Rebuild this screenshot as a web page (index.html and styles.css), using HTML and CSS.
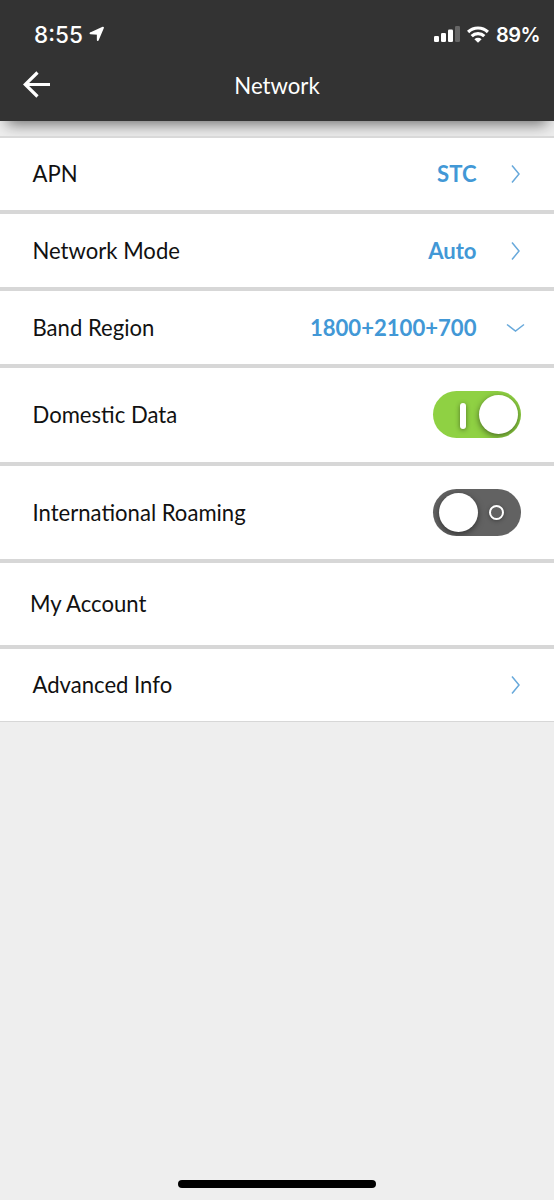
FILE: index.html
```html
<!DOCTYPE html>
<html lang="en">
<head>
<meta charset="utf-8">
<title>Network</title>
<link rel="stylesheet" href="styles.css">
</head>
<body>
<div class="screen">
  <header class="header">
    <div class="status">
      <span class="time">8:55</span>
      <svg class="location" width="16" height="16" viewBox="0 0 16 16"><path d="M14 1.700L8.800 14V7.700L1.500 7.300z" fill="#fff" stroke="#fff" stroke-width="1.900" stroke-linejoin="round"/></svg>
      <svg class="signal" width="26" height="16" viewBox="0 0 26 16"><g fill="#fff"><rect x="0" y="10" width="5" height="6" rx="1.3"/><rect x="7" y="7" width="5" height="9" rx="1.3"/><rect x="14" y="3.500" width="5" height="12.500" rx="1.3"/><rect x="21" y="0" width="5" height="16" rx="1.3" opacity=".25"/></g></svg>
      <svg class="wifi" width="22" height="17" viewBox="0 0 22 17"><g fill="none" stroke="#fff" stroke-width="3.200"><path d="M1.100 6a14.200 14.200 0 0 1 19.800 0"/><path d="M4.700 10.200a8.900 8.900 0 0 1 12.600 0"/></g><path d="M7.400 13.200a5.200 5.200 0 0 1 7.200 0L11 16.800z" fill="#fff"/></svg>
      <span class="battery">89%</span>
    </div>
    <div class="titlebar">
      <svg class="back" width="28" height="28" viewBox="0 0 28 28"><path d="M14.500 1.500L2.200 13.500l12.300 12M2.500 13.500H27" fill="none" stroke="#fff" stroke-width="3.200"/></svg>
      <h1 class="title">Network</h1>
    </div>
  </header>
  <main class="list">
    <div class="row first"><span class="label">APN</span><span class="value">STC</span><svg class="chevron" width="18" height="18" viewBox="0 0 18 18"><path d="M6 .5L13 9l-7 8.500"/></svg></div>
    <div class="row"><span class="label">Network Mode</span><span class="value">Auto</span><svg class="chevron" width="18" height="18" viewBox="0 0 18 18"><path d="M6 .5L13 9l-7 8.500"/></svg></div>
    <div class="row"><span class="label">Band Region</span><span class="value">1800+2100+700</span><svg class="chevron" width="18" height="18" viewBox="0 0 18 18"><path d="M1 5.500L9.500 12 18 5.500"/></svg></div>
    <div class="row domestic"><span class="label">Domestic Data</span><span class="toggle on"><span class="bar"></span><span class="knob"></span></span></div>
    <div class="row roaming"><span class="label">International Roaming</span><span class="toggle off"><span class="knob"></span><span class="ring"></span></span></div>
    <div class="row account"><span class="label">My Account</span></div>
    <div class="row last"><span class="label">Advanced Info</span><svg class="chevron" width="18" height="18" viewBox="0 0 18 18"><path d="M6 .5L13 9l-7 8.500"/></svg></div>
  </main>
  <div class="home"></div>
</div>
</body>
</html>
```
FILE: styles.css
```css
* { box-sizing: border-box; }
body { margin: 0; background: #eee; }
.screen {
  display: flex;
  flex-direction: column;
  width: 554px;
  height: 1200px;
  overflow: hidden;
  background: #eee;
  color: #111;
  font-family: Lato, sans-serif;
}
.header {
  height: 121px;
  flex: none;
  background: #333;
  color: #fff;
  box-shadow: 0 10px 14px -7px rgba(0, 0, 0, .55);
}
.status {
  display: flex;
  align-items: center;
  height: 68px;
  padding: 0 15px 0 34px;
  font-family: Inter, sans-serif;
  line-height: 28px;
}
.time { width: 50px; padding-top: 1px; font-size: 22.500px; font-weight: 500; white-space: nowrap; }
.location { margin-left: 5px; margin-top: -1px; }
.signal { margin-left: auto; }
.wifi { margin-left: 7px; }
.battery { width: 43px; margin-left: 7px; padding-top: 1px; font-size: 20px; font-weight: 600; letter-spacing: -.5px; white-space: nowrap; }
.titlebar {
  display: grid;
  grid-template-columns: 28px 1fr 28px;
  align-items: center;
  height: 34px;
  padding: 0 23px;
}
.title { margin: 0; padding-top: 1px; font-size: 22.200px; font-weight: 400; text-align: center; line-height: 28px; }
.list { position: relative; margin-top: 15px; border-top: 2px solid #d9d9d9; }
.row {
  display: flex;
  align-items: center;
  height: 77px;
  padding: 0 30px 0 32.500px;
  background: #fff;
  border-bottom: 4px solid #d7d7d7;
  font-size: 22.100px;
}
.label { flex: 1; }
.value { margin-right: 29.500px; color: #4298d6; font-weight: 700; }
.chevron { fill: none; stroke: #68a9db; stroke-width: 1.500; overflow: visible; }
.first { height: 76px; }
.first .label, .first .value { margin-top: -1px; }
.domestic { height: 97.500px; padding-right: 33px; }
.roaming { height: 97.500px; padding-right: 33px; }
.account { height: 86px; padding-left: 30px; }
.account .label { margin-top: -1px; }
.last { height: 73px; border-bottom-width: 1px; }
.last .label { margin-top: -1px; }
.toggle {
  display: flex;
  align-items: center;
  width: 88px;
  height: 47px;
  border-radius: 24px;
  overflow: hidden;
}
.on { background: #8fd143; justify-content: flex-end; padding-right: 3px; }
.off { background: #626262; padding-left: 5.500px; }
.knob { width: 39px; height: 39px; border-radius: 50%; background: #fff; box-shadow: 0 2px 6px rgba(0, 0, 0, .5); }
.bar { width: 6px; height: 26px; border-radius: 3px; margin: 2px 13px 0 0; background: #fff; box-shadow: 0 1px 5px rgba(0, 0, 0, .45); }
.ring { width: 15px; height: 15px; margin: 1px 0 0 11px; border: 2px solid #fff; border-radius: 50%; box-shadow: 0 1px 4px rgba(0, 0, 0, .35); }
.home { width: 198px; height: 8px; margin: auto auto 12px; border-radius: 4px; background: #000; }
```
